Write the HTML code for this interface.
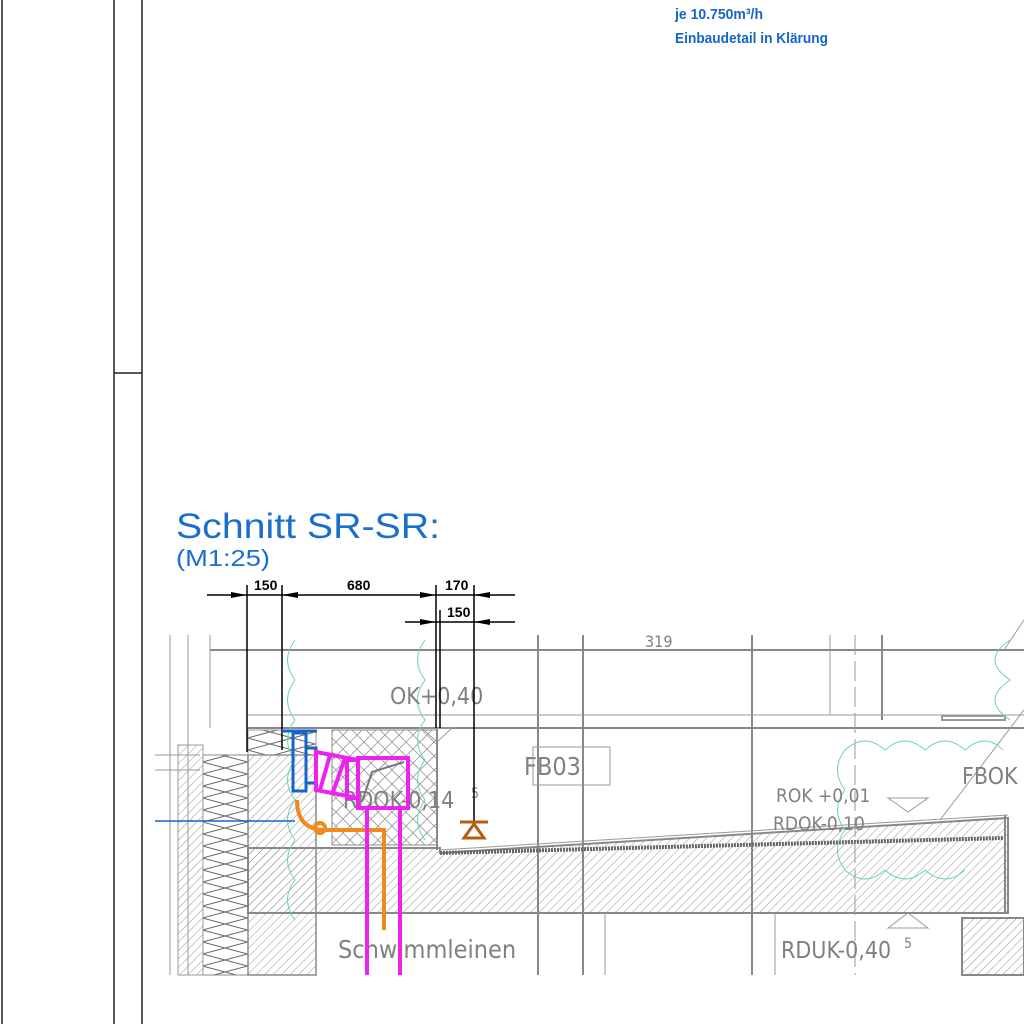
<!DOCTYPE html>
<html><head><meta charset="utf-8"><style>
html,body{margin:0;padding:0;background:#fff;width:1024px;height:1024px;overflow:hidden}
svg{display:block}
</style></head><body>
<svg width="1024" height="1024" viewBox="0 0 1024 1024" xmlns="http://www.w3.org/2000/svg">
<defs>
<pattern id="h" width="6" height="6" patternUnits="userSpaceOnUse" patternTransform="rotate(45)">
<line x1="0" y1="0" x2="0" y2="6" stroke="#8a8a8a" stroke-width="0.9"/></pattern>
<pattern id="x" width="14" height="14" patternUnits="userSpaceOnUse">
<path d="M0 0L14 14M14 0L0 14" stroke="#999" stroke-width="0.8" fill="none"/></pattern>
<pattern id="zz" width="45" height="24" patternUnits="userSpaceOnUse">
<path d="M0 0L45 12L0 24M45 0L0 12L45 24" stroke="#666" stroke-width="1" fill="none"/></pattern>
</defs>
<g stroke="#222" stroke-width="1.5">
<line x1="2" y1="0" x2="2" y2="1024"/>
<line x1="114" y1="0" x2="114" y2="1024"/>
<line x1="142" y1="0" x2="142" y2="1024"/>
<line x1="114" y1="373" x2="142" y2="373"/>
</g>
<g font-family="'Liberation Sans Narrow','Liberation Sans',sans-serif" font-weight="bold" font-size="15" fill="#1565c8">
<text x="675" y="19" textLength="88" lengthAdjust="spacingAndGlyphs">je 10.750m³/h</text>
<text x="675" y="43" textLength="153" lengthAdjust="spacingAndGlyphs">Einbaudetail in Klärung</text>
</g>
<text x="176" y="538" font-family="'Liberation Sans',sans-serif" font-size="35" fill="#1a6fcc" textLength="264" lengthAdjust="spacingAndGlyphs">Schnitt SR-SR:</text>
<text x="176" y="566" font-family="'Liberation Sans',sans-serif" font-size="23" fill="#1a6fcc" textLength="94" lengthAdjust="spacingAndGlyphs">(M1:25)</text>

<path d="M248 848 L440 848 L440 853 L1008 818 L1008 913 L248 913 Z" fill="url(#h)" stroke="#888" stroke-width="2"/>
<rect x="248" y="755" width="68" height="220" fill="url(#h)" stroke="#888" stroke-width="1.5"/>
<rect x="962" y="918" width="62" height="57" fill="url(#h)" stroke="#888" stroke-width="2"/>
<rect x="203" y="755" width="45" height="220" fill="url(#zz)" stroke="#888"/>
<rect x="178" y="745" width="25" height="230" fill="url(#h)" stroke="#999"/>
<rect x="332" y="730" width="105" height="115" fill="url(#x)" stroke="#888"/>
<rect x="248" y="730" width="68" height="25" fill="url(#zz)" stroke="#999"/>
<g stroke="#888" stroke-width="2" fill="none">
<line x1="210" y1="650" x2="1024" y2="650"/>
<line x1="248" y1="728" x2="1024" y2="728"/>
<line x1="538" y1="635" x2="538" y2="975"/>
<line x1="583" y1="635" x2="583" y2="975"/>
<line x1="752" y1="635" x2="752" y2="975"/>
<line x1="882" y1="635" x2="882" y2="720"/>
<line x1="1005" y1="815" x2="1005" y2="913"/>
<line x1="437" y1="728" x2="437" y2="850"/>
<line x1="440" y1="853" x2="1003" y2="838" stroke="#666" stroke-width="4" stroke-dasharray="2 1"/>
</g>
<g stroke="#999" stroke-width="1" fill="none">
<line x1="170" y1="635" x2="170" y2="975"/>
<line x1="188" y1="635" x2="188" y2="975"/>
<line x1="210" y1="635" x2="210" y2="728"/>
<line x1="155" y1="755" x2="200" y2="755"/>
<line x1="155" y1="770" x2="200" y2="770"/>
<line x1="248" y1="715" x2="1024" y2="715"/>
<line x1="440" y1="850" x2="1008" y2="815"/>
<line x1="830" y1="635" x2="830" y2="715"/>
<line x1="855" y1="635" x2="855" y2="975" stroke-dasharray="20 6"/>
<line x1="605" y1="913" x2="605" y2="975"/>
<line x1="775" y1="913" x2="775" y2="975"/>
<line x1="1004" y1="650" x2="1024" y2="620"/>
<line x1="940" y1="820" x2="1024" y2="710"/>
<path d="M942 720 L1005 720 L1005 716 L942 716 Z" stroke-width="2"/>
<path d="M888 798 L928 798 L908 812 Z"/><path d="M888 928 L928 928 L908 913 Z"/>
<path d="M422 728 L452 728 L437 742 Z"/>
</g>
<g stroke="#66d6b0" stroke-width="1" fill="none">
<path d="M845 750 q20 -18 40 0 q20 -18 40 0 q20 -18 40 0 q20 -18 38 0 M845 750 q-15 20 0 40 q-15 20 0 40 q-15 20 0 40 q20 18 40 0 q20 18 40 0 q20 18 40 0"/>
<path d="M295 640 q-15 20 0 40 q-15 20 0 40 q-15 20 0 40 q-15 20 0 40 q-15 20 0 40 q-15 20 0 40 q-15 20 0 40"/>
<path d="M425 640 q-15 20 0 40 q-15 20 0 40 q-15 20 0 40 q-15 20 0 40 q-15 20 0 40"/>
<path d="M1010 640 q-30 20 0 40 q-30 20 0 40"/>
</g>
<g font-family="'DejaVu Sans Condensed','DejaVu Sans',sans-serif" fill="#808080">
<text x="390" y="704" font-size="23">OK+0,40</text>
<text x="343" y="808" font-size="23">RDOK-0,14</text><text x="471" y="798" font-size="14">5</text>
<text x="524" y="775" font-size="25">FB03</text>
<rect x="533" y="747" width="77" height="38" fill="none" stroke="#999"/>
<text x="776" y="802" font-size="19">ROK +0,01</text>
<text x="773" y="830" font-size="19">RDOK-0,10</text>
<text x="962" y="784" font-size="23">FBOK</text>
<text x="781" y="958" font-size="23">RDUK-0,40</text><text x="904" y="948" font-size="14">5</text>
<text x="338" y="958" font-size="25">Schwimmleinen</text>
<text x="645" y="647" font-size="16">319</text>
</g>
<g stroke="#000" stroke-width="1.5" fill="#000">
<line x1="207" y1="595" x2="515" y2="595"/>
<line x1="405" y1="622" x2="515" y2="622"/>
<line x1="247" y1="585" x2="247" y2="752"/>
<line x1="282" y1="585" x2="282" y2="750"/>
<line x1="436" y1="585" x2="436" y2="728"/>
<line x1="440" y1="610" x2="440" y2="728"/>
<line x1="474" y1="585" x2="474" y2="822"/>
<path d="M247 595 l-16 -3 v6 Z M282 595 l16 -3 v6 Z M436 595 l-16 -3 v6 Z M474 595 l16 -3 v6 Z M436 622 l-16 -3 v6 Z M474 622 l16 -3 v6 Z" stroke="none"/>
</g>
<g font-family="'Liberation Sans Narrow','Liberation Sans',sans-serif" font-weight="bold" font-size="14" fill="#000">
<text x="254" y="590">150</text><text x="347" y="590">680</text><text x="445" y="590">170</text><text x="447" y="617">150</text>
</g>
<line x1="155" y1="821" x2="295" y2="821" stroke="#1565c8" stroke-width="1.5"/>
<g stroke="#1565c8" stroke-width="3" fill="none">
<rect x="293" y="733" width="13" height="58"/><rect x="306" y="748" width="10" height="35"/>
<line x1="282" y1="731" x2="317" y2="731"/>
</g>
<g stroke="#f08a1c" stroke-width="4" fill="none">
<path d="M297 800 q0 28 25 30 L384 830 L384 930"/>
<circle cx="320" cy="828" r="5"/>
</g>
<g stroke="#ee22ee" stroke-width="4" fill="none">
<rect x="358" y="758" width="50" height="50"/>
<path d="M316 752 L358 760 L358 798 L316 790 Z M330 755 L320 790 M345 758 L332 795"/>
<rect x="347" y="760" width="11" height="38"/>
<line x1="367" y1="808" x2="367" y2="975"/><line x1="400" y1="808" x2="400" y2="975"/>
</g>
<path d="M362 802 L372 772 L404 762" stroke="#777" stroke-width="2" fill="none"/>
<g stroke="#b65c10" stroke-width="3" fill="none">
<line x1="460" y1="822" x2="488" y2="822"/><path d="M474 824 L464 838 L484 838 Z"/>
</g>
</svg>
</body></html>
